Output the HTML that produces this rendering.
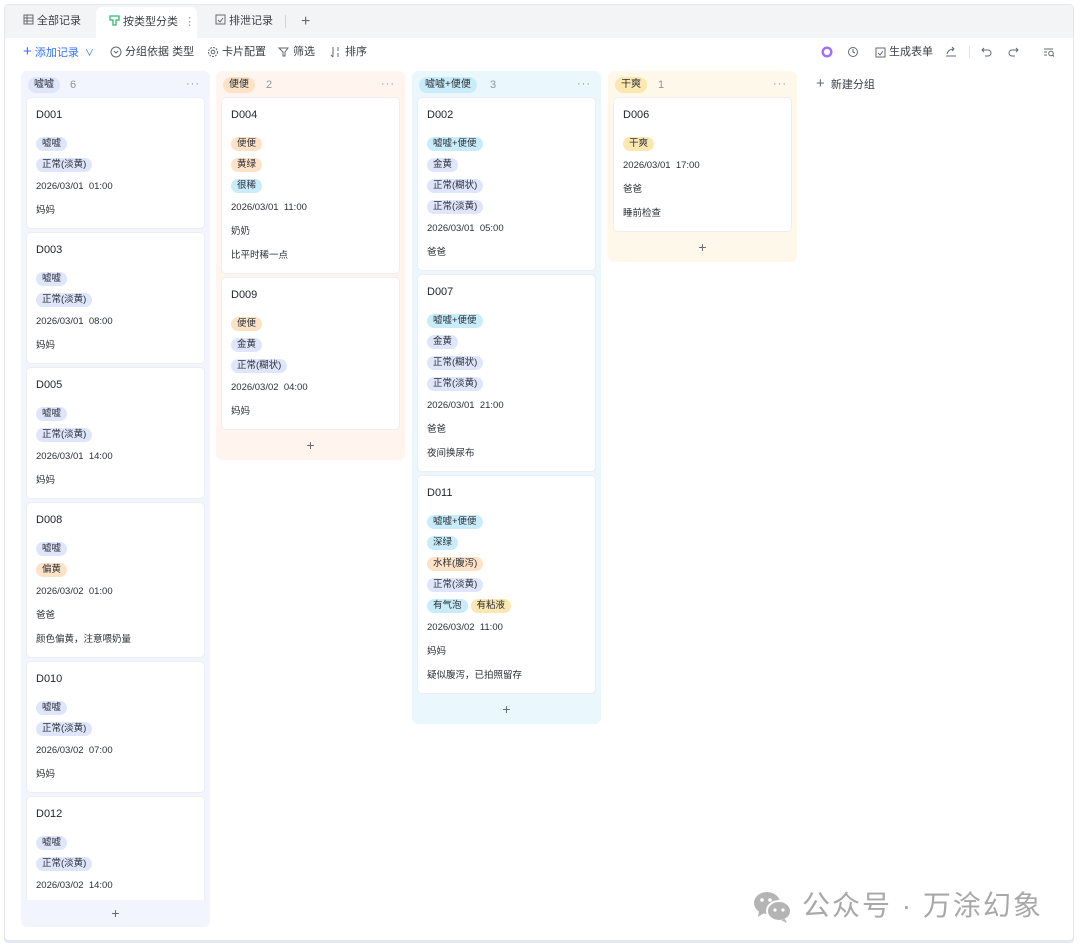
<!DOCTYPE html>
<html><head><meta charset="utf-8"><style>
*{box-sizing:border-box;margin:0;padding:0}
body{width:1080px;height:949px;background:#fff;font-family:"Liberation Sans","Noto Sans CJK SC",sans-serif;color:#1f2329;position:relative;overflow:hidden}
.frame{position:absolute;left:4px;top:4px;width:1070px;height:937px;border:1px solid #e5e6eb;border-radius:4px;background:#fff;box-shadow:0 2px 0 #e3e8f5}
.tabbar{position:absolute;left:5px;top:5px;width:1068px;height:33px;background:#f3f4f6}
.tab{position:absolute;top:0;height:33px;line-height:33px;font-size:11px;color:#3b3f45}
.tab.act{background:#fff;border-radius:6px 6px 0 0;left:91px;width:101px;top:2px;height:31px;line-height:31px;padding-left:13px}
.tool{position:absolute;top:44px;height:16px;line-height:16px;font-size:11px;color:#3b3f45;white-space:nowrap}
.tool svg{vertical-align:-3px}
.col{position:absolute;top:71px;width:189px;border-radius:6px}
.hdr{height:26px;position:relative}
.hdr .t{position:absolute;left:7px;top:6px}
.hdr .n{position:absolute;top:6px;font-size:11px;color:#8f959e;line-height:16px}
.hdr .d{position:absolute;right:10px;top:5px;font-size:11px;line-height:16px;color:#8f959e;letter-spacing:1px}
.tag{display:inline-block;height:14px;line-height:14px;padding:0 6px;border-radius:7px;font-size:9.5px;color:#2b2f36;margin-right:3px}
.hdr .tag{height:16px;line-height:16px;font-size:10px;padding:0 6px;border-radius:8px}
.b{background:#dfe6fb}.o{background:#fde2c6}.c{background:#c9ecfa}.y{background:#fbe8b0}
.card{background:#fff;border-radius:4px;margin:0 6px 5px 6px;padding:8px 9px 5px 9px;box-shadow:0 0 0 1px #eceef3}
.card .ti{height:18px;line-height:18px;font-size:11px;color:#1f2329;margin-bottom:9px}
.card .tr{height:21px;display:flex;align-items:center}
.card .ln{height:24px;line-height:24px;font-size:9.5px;color:#2b2f36}
.add{height:26px;line-height:22px;text-align:center;color:#646a73;font-size:14px}
</style></head><body>
<div class="frame"></div>
<div class="tabbar">
 <div class="tab" style="left:18px"><svg width="11" height="11" viewBox="0 0 11 11" style="vertical-align:-1px"><rect x="1" y="1" width="9" height="9" fill="none" stroke="#646a73"/><path d="M1 4h9M1 7h9M4 1v9" stroke="#646a73"/></svg>&nbsp;全部记录</div>
 <div class="tab act"><svg width="11" height="11" viewBox="0 0 11 11" style="vertical-align:-1px"><path d="M1 1h9v4H7v5H4V5H1z" fill="none" stroke="#2fb86b" stroke-width="1.3"/></svg>&nbsp;按类型分类 <span style="color:#8f959e">&nbsp;⋮</span></div>
 <div class="tab" style="left:210px"><svg width="11" height="11" viewBox="0 0 11 11" style="vertical-align:-1px"><rect x="1" y="1" width="9" height="9" fill="none" stroke="#646a73"/><path d="M3 6l2 2 3-4" fill="none" stroke="#646a73"/></svg>&nbsp;排泄记录</div>
 <div style="position:absolute;left:280px;top:10px;width:1px;height:13px;background:#d0d3d6"></div>
 <div class="tab" style="left:296px;font-size:16px;color:#646a73">+</div>
</div>
<div class="tool" style="left:23px;color:#3370ff"><span style="font-size:15px">+</span> 添加记录 &nbsp;<span style="font-size:9px">∨</span></div>
<div class="tool" style="left:110px"><svg width="12" height="12"><circle cx="6" cy="6" r="5" fill="none" stroke="#646a73"/><path d="M4 5l2 2 2-2" fill="none" stroke="#646a73"/></svg> 分组依据 类型</div>
<div class="tool" style="left:207px"><svg width="12" height="12"><circle cx="6" cy="6" r="4.5" fill="none" stroke="#646a73" stroke-dasharray="2 1"/><circle cx="6" cy="6" r="1.8" fill="none" stroke="#646a73"/></svg> 卡片配置</div>
<div class="tool" style="left:278px"><svg width="12" height="12"><path d="M1 2h9L7 6v4H5V6z" fill="none" stroke="#646a73"/></svg> 筛选</div>
<div class="tool" style="left:330px"><svg width="12" height="12"><path d="M3 1v10M1 9l2 2M8 1v4M8 7v4" stroke="#646a73" fill="none"/></svg> 排序</div>
<div class="tool" style="left:821px"><svg width="12" height="12"><circle cx="6" cy="6" r="4.3" fill="none" stroke="#a56cf5" stroke-width="2.4"/></svg></div>
<div class="tool" style="left:847px"><svg width="12" height="12"><circle cx="6" cy="6" r="4.5" fill="none" stroke="#646a73"/><path d="M6 3v3l2 1" stroke="#646a73" fill="none"/></svg></div>
<div class="tool" style="left:875px"><svg width="11" height="11"><rect x="1" y="1" width="9" height="9" fill="none" stroke="#646a73"/><path d="M3 6l2 2 3-4" fill="none" stroke="#646a73"/></svg> 生成表单</div>
<div class="tool" style="left:945px"><svg width="12" height="12"><path d="M1 10h10M2 8c1-4 4-5 7-5M7 1l2 2-2 2" fill="none" stroke="#646a73"/></svg></div>
<div style="position:absolute;left:969px;top:46px;width:1px;height:12px;background:#dee0e3"></div>
<div class="tool" style="left:981px"><svg width="12" height="12"><path d="M3 2L1 4l2 2M1 4h6a3 3 0 010 6H4" fill="none" stroke="#646a73"/></svg></div>
<div class="tool" style="left:1007px"><svg width="12" height="12"><path d="M9 2l2 2-2 2M11 4H5a3 3 0 000 6h3" fill="none" stroke="#646a73"/></svg></div>
<div class="tool" style="left:1043px"><svg width="12" height="12"><path d="M1 3h9M1 6h3M1 9h3" stroke="#646a73"/><circle cx="8" cy="7.5" r="2.3" fill="none" stroke="#646a73"/><path d="M9.6 9.1l1.4 1.4" stroke="#646a73"/></svg></div>

<!-- col1 -->
<div class="col" style="left:21px;height:856px;background:#f2f5fe">
 <div class="hdr"><span class="tag b t">嘘嘘</span><span class="n" style="left:49px">6</span><span class="d">···</span></div>
 <div style="height:803px;overflow:hidden;padding-top:1px">
  <div class="card"><div class="ti">D001</div><div class="tr"><span class="tag b">嘘嘘</span></div><div class="tr"><span class="tag b">正常(淡黄)</span></div><div class="ln">2026/03/01&nbsp; 01:00</div><div class="ln">妈妈</div></div>
  <div class="card"><div class="ti">D003</div><div class="tr"><span class="tag b">嘘嘘</span></div><div class="tr"><span class="tag b">正常(淡黄)</span></div><div class="ln">2026/03/01&nbsp; 08:00</div><div class="ln">妈妈</div></div>
  <div class="card"><div class="ti">D005</div><div class="tr"><span class="tag b">嘘嘘</span></div><div class="tr"><span class="tag b">正常(淡黄)</span></div><div class="ln">2026/03/01&nbsp; 14:00</div><div class="ln">妈妈</div></div>
  <div class="card"><div class="ti">D008</div><div class="tr"><span class="tag b">嘘嘘</span></div><div class="tr"><span class="tag o">偏黄</span></div><div class="ln">2026/03/02&nbsp; 01:00</div><div class="ln">爸爸</div><div class="ln">颜色偏黄，注意喂奶量</div></div>
  <div class="card"><div class="ti">D010</div><div class="tr"><span class="tag b">嘘嘘</span></div><div class="tr"><span class="tag b">正常(淡黄)</span></div><div class="ln">2026/03/02&nbsp; 07:00</div><div class="ln">妈妈</div></div>
  <div class="card"><div class="ti">D012</div><div class="tr"><span class="tag b">嘘嘘</span></div><div class="tr"><span class="tag b">正常(淡黄)</span></div><div class="ln">2026/03/02&nbsp; 14:00</div><div class="ln">妈妈</div></div>
 </div>
 <div class="add" style="height:27px;line-height:27px">+</div>
</div>

<!-- col2 -->
<div class="col" style="left:216px;background:#fff5ee">
 <div class="hdr"><span class="tag o t">便便</span><span class="n" style="left:50px">2</span><span class="d">···</span></div>
 <div style="padding-top:1px">
 <div class="card"><div class="ti">D004</div><div class="tr"><span class="tag o">便便</span></div><div class="tr"><span class="tag o">黄绿</span></div><div class="tr"><span class="tag c">很稀</span></div><div class="ln">2026/03/01&nbsp; 11:00</div><div class="ln">奶奶</div><div class="ln">比平时稀一点</div></div>
 <div class="card"><div class="ti">D009</div><div class="tr"><span class="tag o">便便</span></div><div class="tr"><span class="tag b">金黄</span></div><div class="tr"><span class="tag b">正常(糊状)</span></div><div class="ln">2026/03/02&nbsp; 04:00</div><div class="ln">妈妈</div></div>
 </div>
 <div class="add">+</div>
</div>

<!-- col3 -->
<div class="col" style="left:412px;background:#eaf7fd">
 <div class="hdr"><span class="tag c t">嘘嘘+便便</span><span class="n" style="left:78px">3</span><span class="d">···</span></div>
 <div style="padding-top:1px">
 <div class="card"><div class="ti">D002</div><div class="tr"><span class="tag c">嘘嘘+便便</span></div><div class="tr"><span class="tag b">金黄</span></div><div class="tr"><span class="tag b">正常(糊状)</span></div><div class="tr"><span class="tag b">正常(淡黄)</span></div><div class="ln">2026/03/01&nbsp; 05:00</div><div class="ln">爸爸</div></div>
 <div class="card"><div class="ti">D007</div><div class="tr"><span class="tag c">嘘嘘+便便</span></div><div class="tr"><span class="tag b">金黄</span></div><div class="tr"><span class="tag b">正常(糊状)</span></div><div class="tr"><span class="tag b">正常(淡黄)</span></div><div class="ln">2026/03/01&nbsp; 21:00</div><div class="ln">爸爸</div><div class="ln">夜间换尿布</div></div>
 <div class="card"><div class="ti">D011</div><div class="tr"><span class="tag c">嘘嘘+便便</span></div><div class="tr"><span class="tag c">深绿</span></div><div class="tr"><span class="tag o">水样(腹泻)</span></div><div class="tr"><span class="tag b">正常(淡黄)</span></div><div class="tr"><span class="tag c">有气泡</span><span class="tag y">有粘液</span></div><div class="ln">2026/03/02&nbsp; 11:00</div><div class="ln">妈妈</div><div class="ln">疑似腹泻，已拍照留存</div></div>
 </div>
 <div class="add">+</div>
</div>

<!-- col4 -->
<div class="col" style="left:608px;background:#fdf8ea">
 <div class="hdr"><span class="tag y t">干爽</span><span class="n" style="left:50px">1</span><span class="d">···</span></div>
 <div style="padding-top:1px">
 <div class="card"><div class="ti">D006</div><div class="tr"><span class="tag y">干爽</span></div><div class="ln">2026/03/01&nbsp; 17:00</div><div class="ln">爸爸</div><div class="ln">睡前检查</div></div>
 </div>
 <div class="add">+</div>
</div>

<div style="position:absolute;left:816px;top:76px;font-size:11px;color:#3b3f45;line-height:16px"><span style="font-size:15px;color:#646a73">+</span>&nbsp; 新建分组</div>

<!-- watermark -->
<svg style="position:absolute;left:752px;top:890px" width="42" height="34" viewBox="0 0 42 34"><ellipse cx="15" cy="13" rx="13" ry="11" fill="#b4b4b4"/><path d="M7 21l-1 6 6-4z" fill="#b4b4b4"/><ellipse cx="27" cy="21" rx="12" ry="10" fill="#b4b4b4" stroke="#fff" stroke-width="2"/><path d="M33 29l2 4-6-3z" fill="#b4b4b4"/><circle cx="10" cy="10" r="1.8" fill="#fff"/><circle cx="18" cy="10" r="1.8" fill="#fff"/><circle cx="23" cy="20" r="1.6" fill="#fff"/><circle cx="31" cy="20" r="1.6" fill="#fff"/></svg>
<div style="position:absolute;left:802px;top:889px;font-size:28px;line-height:34px;color:#a8a8a8;white-space:nowrap;letter-spacing:2px">公众号 · 万涂幻象</div>
</body></html>
